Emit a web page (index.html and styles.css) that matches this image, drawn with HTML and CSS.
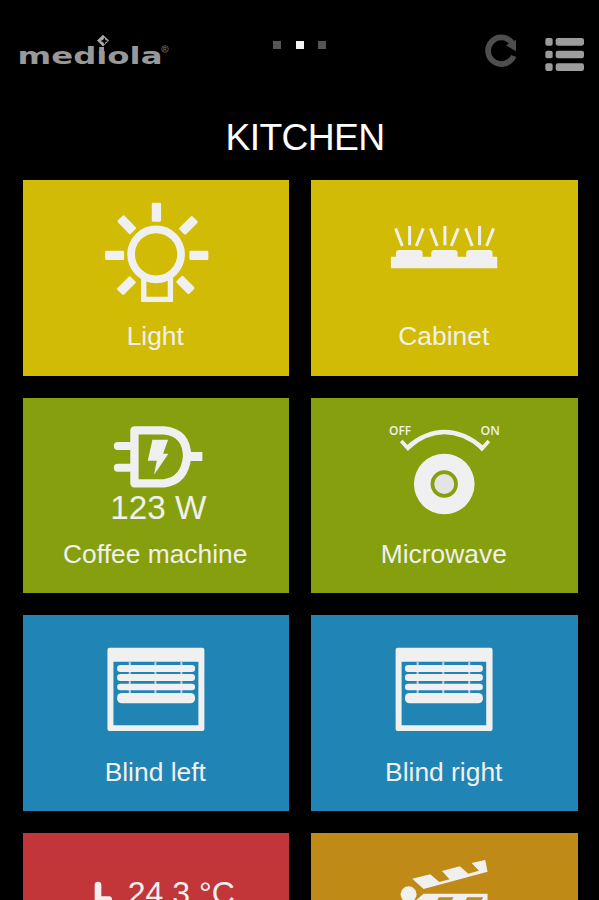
FILE: index.html
```html
<!DOCTYPE html>
<html lang="en">
<head>
<meta charset="utf-8">
<title>Kitchen</title>
<link rel="stylesheet" href="styles.css">
</head>
<body>
<header class="topbar">
  <svg class="logo" viewBox="0 20 200 60">
    <text class="logo-text" x="17.5" y="63.5" textLength="145" lengthAdjust="spacingAndGlyphs">mediola</text>
    <path class="logo-gap" d="M96 37h11v12H96z"/>
    <path d="M99.200 47h4.800v7h-4.800z"/>
    <path class="logo-mark" fill-rule="evenodd" d="M103 34.800L109 40.600L103 46.400L97 40.600ZM104.500 37.500L103 40L100.500 41L103 42L104.500 44.500L105.500 42L108 41L105.500 40Z"/>
    <circle class="logo-ring" cx="165" cy="49" r="3.300"/>
    <text class="logo-reg" x="163.100" y="51">R</text>
  </svg>
  <nav class="pager"><span class="dot"></span><span class="dot active"></span><span class="dot"></span></nav>
  <svg class="refresh" viewBox="675 40 100 110">
    <path class="refresh-arc" d="M761 109A40 40 0 1 1 756 69"/>
    <path class="refresh-tip" d="M768 60V95L738 77Z"/>
  </svg>
  <svg class="menu" viewBox="855 50 120 105">
    <rect x="856" y="53" width="22" height="23" rx="6"/><rect x="887" y="53" width="85" height="23" rx="7"/>
    <rect x="856" y="91" width="22" height="23" rx="6"/><rect x="887" y="91" width="85" height="23" rx="7"/>
    <rect x="856" y="129" width="22" height="23" rx="6"/><rect x="887" y="129" width="85" height="23" rx="7"/>
  </svg>
</header>
<h1 class="title">KITCHEN</h1>
<main class="grid">
  <section class="tile yellow">
    <svg class="icon" viewBox="22.500 15 800 420">
      <circle class="line" cx="422" cy="238" r="75" stroke-width="23"/>
      <path class="line" d="M385 308V373H465V308" stroke-width="16"/>
      <rect x="409" y="83" width="28" height="57" rx="4"/>
      <rect x="269" y="227" width="57" height="28" rx="4"/>
      <rect x="522" y="227" width="57" height="28" rx="4"/>
      <rect x="-28" y="-14" width="56" height="28" rx="4" transform="translate(334 149) rotate(46)"/>
      <rect x="-28" y="-14" width="56" height="28" rx="4" transform="translate(519 151) rotate(-45)"/>
      <rect x="-28" y="-14" width="56" height="28" rx="4" transform="translate(333 332) rotate(-45)"/>
      <rect x="-27" y="-14" width="54" height="28" rx="4" transform="translate(510 330) rotate(45)"/>
    </svg>
    <p class="label">Light</p>
  </section>
  <section class="tile yellow">
    <svg class="icon" viewBox="18 15 800 420">
      <path d="M258 280V245H273V235Q273 225 283 225H343Q353 225 353 235V245H379V235Q379 225 389 225H448Q458 225 458 235V245H484V235Q484 225 494 225H553Q563 225 563 235V245H577V280Z"/>
      <path class="line" stroke-width="9" d="M272 160L292 213M314 153V211M355 160L334 213M377 160L397 213M420 153V211M460 160L439 213M482 160L502 213M524 153V211M566 160L545 213"/>
    </svg>
    <p class="label">Cabinet</p>
  </section>
  <section class="tile green">
    <svg class="icon short" viewBox="22.500 15 800 279">
      <path class="line" stroke-width="25" stroke-linejoin="round" d="M357 112H446Q515 119 515 191Q508 264 446 271H357Z"/>
      <path class="line" stroke-width="24" stroke-linecap="round" d="M307 159H352M307 224H352"/>
      <path d="M520 177H561V204H520Z"/>
      <path d="M411 140H458L443 182H459L416 245L424 203H397Z"/>
    </svg>
    <p class="value">123 W</p>
    <p class="label">Coffee machine</p>
  </section>
  <section class="tile green">
    <svg class="icon" viewBox="18 15 800 420">
      <path class="line" stroke-width="14" d="M310 162Q362 117 418 117Q477 117 530 163"/>
      <path class="line" stroke-width="11" d="M289 144L309 166L322 153M518 153L531 167L552 144"/>
      <circle cx="418" cy="273" r="91"/>
      <circle class="knob" cx="418" cy="273" r="35.500"/>
      <text class="mark" x="252" y="126" textLength="67" lengthAdjust="spacingAndGlyphs">OFF</text>
      <text class="mark" x="527" y="126" textLength="58" lengthAdjust="spacingAndGlyphs">ON</text>
    </svg>
    <p class="label">Microwave</p>
  </section>
  <section class="tile blue">
    <svg class="icon" viewBox="22.500 15 800 420">
      <path fill-rule="evenodd" d="M282 113H561Q567 113 567 119V357Q567 363 561 363H282Q276 363 276 357V119Q276 113 282 113ZM294 155V346H549V155Z"/>
      <path class="line cord" d="M343 153V255M420 153V255M498 153V255"/>
      <rect x="305" y="165" width="234" height="21" rx="10"/><rect x="305" y="192" width="234" height="21" rx="10"/><rect x="305" y="221" width="234" height="20" rx="10"/><rect x="305" y="249" width="234" height="31" rx="14"/>
    </svg>
    <p class="label">Blind left</p>
  </section>
  <section class="tile blue">
    <svg class="icon" viewBox="27 15 800 420">
      <path fill-rule="evenodd" d="M287 113H566Q572 113 572 119V357Q572 363 566 363H287Q281 363 281 357V119Q281 113 287 113ZM299 155V346H553V155Z"/>
      <path class="line cord" d="M347 153V255M424 153V255M502 153V255"/>
      <rect x="309" y="165" width="234" height="21" rx="10"/><rect x="309" y="192" width="234" height="21" rx="10"/><rect x="309" y="221" width="234" height="20" rx="10"/><rect x="309" y="249" width="234" height="31" rx="14"/>
    </svg>
    <p class="label">Blind right</p>
  </section>
  <section class="tile red">
    <div class="reading">
      <svg class="thermo" viewBox="240 160 60 120"><path d="M242 280V175Q242 165 252 165Q262 165 262 175V209H285Q294 209 294 218V280Z"/></svg>
      <p class="value temp">24.3 °C</p>
    </div>
  </section>
  <section class="tile orange">
    <svg class="icon" viewBox="18 23 800 420">
      <path d="M322 160L376 147L403 170L434 162L411 137L465 123L490 145L522 136L500 113L541 104L548 139L356 191Z"/>
      <circle cx="311" cy="207" r="24"/>
      <path fill-rule="evenodd" d="M356 205H548V300H326V231ZM402 216L382 250H426L446 216ZM487 216L467 250H515L535 216Z"/>
    </svg>
  </section>
</main>
</body>
</html>
```

FILE: styles.css
```css
* { box-sizing: border-box; }

html { overflow: hidden; }

body {
  margin: 0;
  width: 599px;
  height: 900px;
  overflow: hidden;
  background: #000;
  color: #f0f0ee;
  font-family: "Liberation Sans", Arial, sans-serif;
}

h1, p { margin: 0; font-weight: 400; }
svg { display: block; flex: none; }

.topbar {
  display: flex;
  align-items: flex-start;
  height: 110px;
  padding-top: 20px;
}

.logo { width: 200px; height: 60px; fill: #999; }
.logo-text { font: bold 23.500px "DejaVu Sans", sans-serif; }
.logo-gap { fill: #000; }
.logo-mark { fill: #a8a8a8; }
.logo-ring { fill: none; stroke: #555; stroke-width: 1; }
.logo-reg { font: bold 5px "Liberation Sans", sans-serif; fill: #666; }

.pager { display: flex; gap: 14.500px; margin: 20.500px 0 0 73.300px; }
.dot { width: 8px; height: 8px; background: #555; }
.dot.active { background: #f2f2f2; }

.refresh { width: 33.330px; height: 36.670px; margin: 13.300px 0 0 158.700px; }
.refresh-arc { fill: none; stroke: #4e4e4e; stroke-width: 17; }
.refresh-tip { fill: #4e4e4e; }
.menu { width: 40px; height: 35px; margin: 16.700px 0 0 26.700px; fill: #9c9c9c; }

.title {
  height: 70px;
  padding-left: 11px;
  text-align: center;
  font-size: 37.300px;
  line-height: 55px;
  color: #fff;
  letter-spacing: -0.700px;
}

.grid {
  display: grid;
  grid-template-columns: 266.500px 266.500px;
  grid-auto-rows: 195.600px;
  gap: 22px;
  padding-left: 22.500px;
}

.tile {
  display: flex;
  flex-direction: column;
  align-items: center;
  overflow: hidden;
  fill: #f0f0f0;
}

.yellow { background: #d2bb04; }
.green { background: #869f0e; }
.blue { background: #2084b5; }
.red { background: #c23639; }
.orange { background: #c08a17; }

.icon { width: 266.500px; height: 140px; }
.icon.short { height: 93px; }
.line { fill: none; stroke: #f0f0f0; }
.cord { stroke: #b9d3e3; stroke-width: 6; }
.knob { fill: #e4e4e2; stroke: #869f0e; stroke-width: 11; }
.mark { font: 600 39px "Open Sans", sans-serif; }

.label { margin: -0.700px 1px 0 0; font-size: 26.400px; line-height: 34px; }
.value { height: 47px; padding-left: 5px; font-size: 33.300px; line-height: 34px; }

.reading { display: flex; margin: 47.500px 0 0 17px; }
.thermo { width: 20px; height: 40px; }
.value.temp { height: 40px; padding: 0; margin-left: 14px; font-size: 32px; line-height: 27px; }
```
